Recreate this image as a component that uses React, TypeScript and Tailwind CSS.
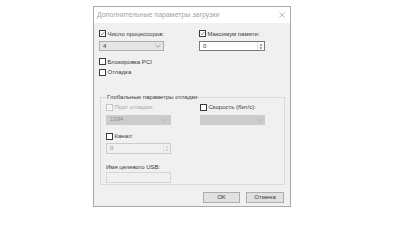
import React from 'react'

const Chevron = ({ color = '#7a7a7a' }: { color?: string }) => (
  <svg width="6" height="4" viewBox="0 0 6 4" className="shrink-0">
    <path d="M0.5 0.8 L3 3.2 L5.5 0.8" fill="none" stroke={color} strokeWidth="0.6" />
  </svg>
)

const CheckBox = ({
  checked = false,
  disabled = false,
  label,
}: {
  checked?: boolean
  disabled?: boolean
  label: string
}) => (
  <div className="flex h-[7px] items-center gap-[1.5px]">
    <div
      className={`flex h-[7px] w-[7px] shrink-0 items-center justify-center border bg-white ${
        disabled ? 'border-[#c4c4c4]' : 'border-[#3a3a3a]'
      }`}
    >
      {checked && (
        <svg width="5" height="5" viewBox="0 0 5 5">
          <path
            d="M0.6 2.6 L1.9 3.9 L4.4 0.9"
            fill="none"
            stroke={disabled ? '#c0c0c0' : '#3a3a3a'}
            strokeWidth="0.6"
          />
        </svg>
      )}
    </div>
    <span className={`leading-none ${disabled ? 'text-[#a8a8a8]' : 'text-[#3a3a3a]'}`}>{label}</span>
  </div>
)

const Spinner = ({ disabled = false }: { disabled?: boolean }) => {
  const c = disabled ? '#b8b8b8' : '#555555'
  return (
    <div className="flex h-full w-[7px] flex-col justify-center gap-[1px] border-l border-[#e3e3e3]">
      <svg width="6" height="3" viewBox="0 0 6 3">
        <path d="M1.5 2.5 L3 1 L4.5 2.5 Z" fill={c} />
      </svg>
      <svg width="6" height="3" viewBox="0 0 6 3">
        <path d="M1.5 0.5 L3 2 L4.5 0.5 Z" fill={c} />
      </svg>
    </div>
  )
}

export default function App() {
  return (
    <div className="h-[240px] w-[401px] bg-white pl-[93px] pt-[6px] font-['Liberation_Sans',Arial,sans-serif] text-[6px]">
      <div className="flex h-[201px] w-[198px] flex-col border border-[#a9a9a9] bg-[#f0f0f0]">
        <div className="flex h-[16px] shrink-0 items-center justify-between bg-white pl-[3px] pr-[5px]">
          <span className="text-[7px] text-[#a3a3a3]">Дополнительные параметры загрузки</span>
          <svg width="6" height="6" viewBox="0 0 6 6">
            <path d="M0.5 0.5 L5.5 5.5 M5.5 0.5 L0.5 5.5" stroke="#8a8a8a" strokeWidth="0.6" />
          </svg>
        </div>

        <div className="flex flex-1 flex-col pl-[5px] pt-[7px]">
          <div className="flex">
            <div className="flex w-[100px] flex-col gap-[4px]">
              <CheckBox checked label="Число процессоров:" />
              <div className="flex h-[10px] w-[65px] items-center justify-between border border-[#adadad] bg-[#e5e5e5] pl-[3px] pr-[2px]">
                <span className="text-[#3a3a3a]">4</span>
                <Chevron />
              </div>
            </div>
            <div className="flex flex-col gap-[4px]">
              <CheckBox checked label="Максимум памяти:" />
              <div className="flex h-[10px] w-[66px] items-center justify-between border border-[#7a7a7a] bg-white pl-[3px]">
                <span className="text-[#3a3a3a]">0</span>
                <Spinner />
              </div>
            </div>
          </div>

          <div className="mt-[7px] flex flex-col gap-[3.5px]">
            <CheckBox label="Блокировка PCI" />
            <CheckBox label="Отладка" />
          </div>

          <fieldset className="ml-[1px] mt-[18px] h-[91px] w-[185px] border border-[#d9d9d9] px-[5px]">
            <legend className="px-[1px] leading-[7px] text-[#3a3a3a]">Глобальные параметры отладки</legend>
            <div className="mt-[3px] flex">
              <div className="flex w-[94px] flex-col gap-[4px]">
                <CheckBox checked disabled label="Порт отладки:" />
                <div className="flex h-[10px] w-[65px] items-center justify-between border border-[#cccccc] bg-[#cccccc] pl-[3px] pr-[2px]">
                  <span className="text-[#8c8c8c]">1394</span>
                  <Chevron color="#a8a8a8" />
                </div>
              </div>
              <div className="flex flex-col gap-[4px]">
                <CheckBox label="Скорость (бит/с):" />
                <div className="flex h-[10px] w-[65px] items-center justify-end border border-[#cccccc] bg-[#cccccc] pr-[2px]">
                  <Chevron color="#a8a8a8" />
                </div>
              </div>
            </div>
            <div className="mt-[8px] flex flex-col gap-[3px]">
              <CheckBox label="Канал:" />
              <div className="flex h-[11px] w-[65px] items-center justify-between border border-[#cccccc] bg-[#f0f0f0] pl-[3px]">
                <span className="text-[#8c8c8c]">0</span>
                <Spinner disabled />
              </div>
            </div>
            <div className="mt-[10px] flex flex-col gap-[2px]">
              <span className="leading-[6px] text-[#3a3a3a]">Имя целевого USB:</span>
              <div className="h-[11px] w-[65px] border border-[#d6d6d6] bg-[#f0f0f0]" />
            </div>
          </fieldset>

          <div className="mt-[7px] flex justify-end gap-[6px] pr-[6px]">
            <button className="h-[11px] w-[37px] border border-[#adadad] bg-[#e1e1e1] text-[6px] leading-none text-[#3a3a3a]">
              OK
            </button>
            <button className="h-[11px] w-[38px] border border-[#adadad] bg-[#e1e1e1] text-[6px] leading-none text-[#3a3a3a]">
              Отмена
            </button>
          </div>
        </div>
      </div>
    </div>
  )
}
